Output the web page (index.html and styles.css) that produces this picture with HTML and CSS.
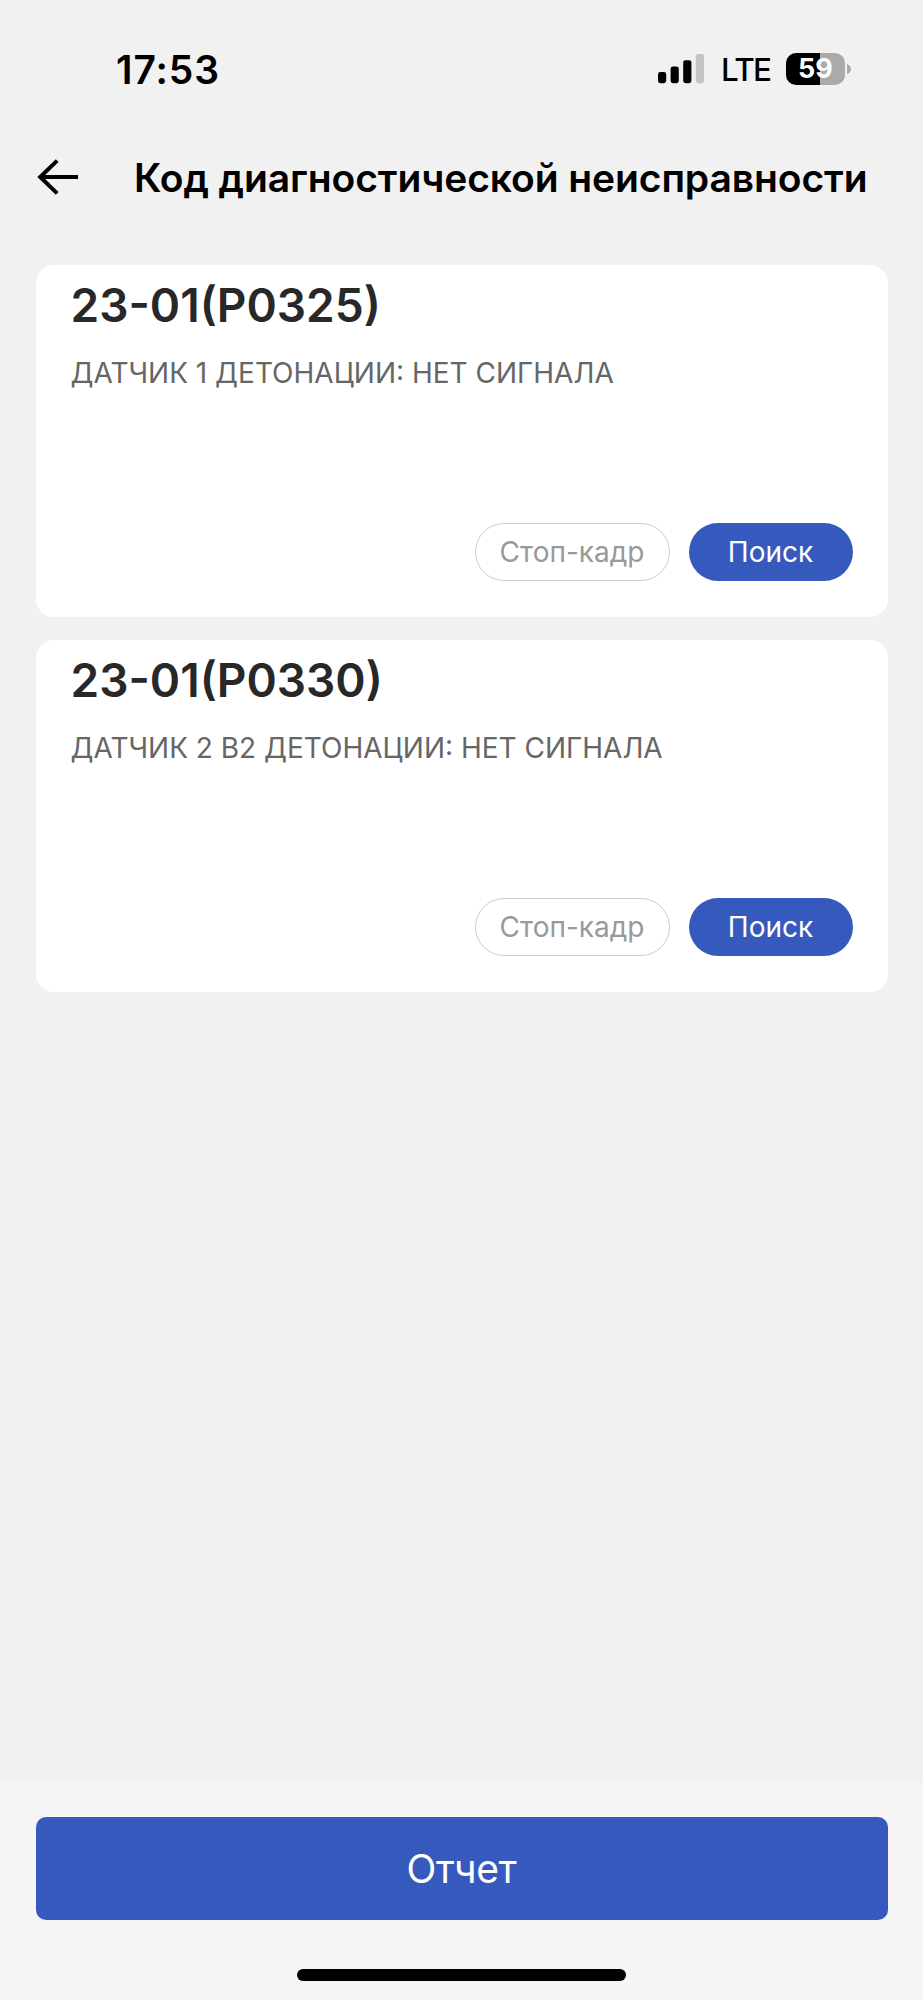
FILE: index.html
```html
<!DOCTYPE html>
<html lang="ru">
<head>
<meta charset="utf-8">
<title>Код диагностической неисправности</title>
<link rel="stylesheet" href="styles.css">
</head>
<body>
<div class="screen">
  <div class="status">
    <span class="time">17:53</span>
    <div class="indicators">
      <svg class="signal" width="48" height="32" viewBox="0 0 48 32">
        <rect x="1" y="19" width="8.2" height="11.2" rx="2.4"/>
        <rect x="13.6" y="13.4" width="8.2" height="16.8" rx="2.4"/>
        <rect x="26.2" y="7.2" width="8.2" height="23" rx="2.4"/>
        <rect x="38.8" y="1" width="8.2" height="29.2" rx="2.4" fill="#c4c4c4"/>
      </svg>
      <span class="network">LTE</span>
      <span class="battery">59</span>
      <svg class="nub" width="4" height="10" viewBox="0 0 4 10"><path d="M0 0Q4 1.5 4 5T0 10Z" fill="#aaa"/></svg>
    </div>
  </div>
  <header class="header">
    <svg class="back" width="44" height="40" viewBox="0 0 44 40" fill="none" stroke="#000" stroke-width="4">
      <path d="M43 19H5M22.2 2.6L5.2 19L22.2 35.4"/>
    </svg>
    <h1 class="title">Код диагностической неисправности</h1>
  </header>
  <main class="list">
    <section class="card">
      <h2 class="code">23-01(P0325)</h2>
      <p class="desc">ДАТЧИК 1 ДЕТОНАЦИИ: НЕТ СИГНАЛА</p>
      <div class="actions">
        <button class="pill outline">Стоп-кадр</button>
        <button class="pill solid">Поиск</button>
      </div>
    </section>
    <section class="card">
      <h2 class="code">23-01(P0330)</h2>
      <p class="desc">ДАТЧИК 2 B2 ДЕТОНАЦИИ: НЕТ СИГНАЛА</p>
      <div class="actions">
        <button class="pill outline">Стоп-кадр</button>
        <button class="pill solid">Поиск</button>
      </div>
    </section>
  </main>
  <footer class="footer">
    <button class="report">Отчет</button>
    <div class="home"></div>
  </footer>
</div>
</body>
</html>
```
FILE: styles.css
```css
* { box-sizing: border-box; margin: 0; padding: 0; }
body { background: #f1f1f1; font-family: Inter, "Liberation Sans", sans-serif; color: #000; }
button { font: inherit; border: 0; }
.screen { height: 2000px; display: flex; flex-direction: column; }
.status { height: 138px; padding: 0 72px 0 116px; display: flex; align-items: center; justify-content: space-between; }
.time { font-size: 39px; font-weight: 600; letter-spacing: 0.9px; }
.indicators { display: flex; align-items: center; }
.signal { margin-right: 16px; }
.network { width: 48px; font-size: 31.5px; font-weight: 500; letter-spacing: -1.7px; margin-right: 17px; line-height: 34px; padding-top: 1px; white-space: nowrap; }
.battery { width: 59px; height: 32px; border-radius: 10px; background: linear-gradient(90deg, #000 58%, #aaa 58%); color: #fff; font-size: 27px; font-weight: 700; line-height: 32px; text-align: center; }
.nub { margin-left: 2px; }
.header { height: 80px; padding: 0 35px; display: flex; align-items: center; }
.back { margin-right: 55px; flex: none; }
.title { font-size: 39px; font-weight: 600; white-space: nowrap; line-height: 80px; letter-spacing: -0.1px; }
.list { flex: 1; padding: 47px 35.5px 0; display: flex; flex-direction: column; gap: 23px; }
.card { height: 352px; flex: none; background: #fff; border-radius: 18px; padding: 12px 35px 36px; display: flex; flex-direction: column; }
.code { font-size: 46px; font-weight: 600; line-height: 56px; color: #282828; }
.desc { margin-top: 20px; font-size: 28px; line-height: 40px; color: #666; white-space: nowrap; }
.actions { margin-top: auto; display: flex; justify-content: flex-end; gap: 19px; }
.pill { height: 58px; border-radius: 29px; font-size: 28px; line-height: 58px; }
.outline { width: 195px; border: 1px solid #ccc; line-height: 56px; background: #fff; color: #999; }
.solid { width: 164px; background: #3659bd; color: #fff; }
.footer { height: 218px; background: #f5f5f6; padding: 35px 35.5px 0; display: flex; flex-direction: column; align-items: center; }
.report { width: 100%; height: 103px; border-radius: 10px; background: #3659bd; color: #fff; font-size: 39px; line-height: 103px; letter-spacing: -0.3px; }
.home { width: 329px; height: 12px; margin-top: 49px; border-radius: 6px; background: #000; }
```
